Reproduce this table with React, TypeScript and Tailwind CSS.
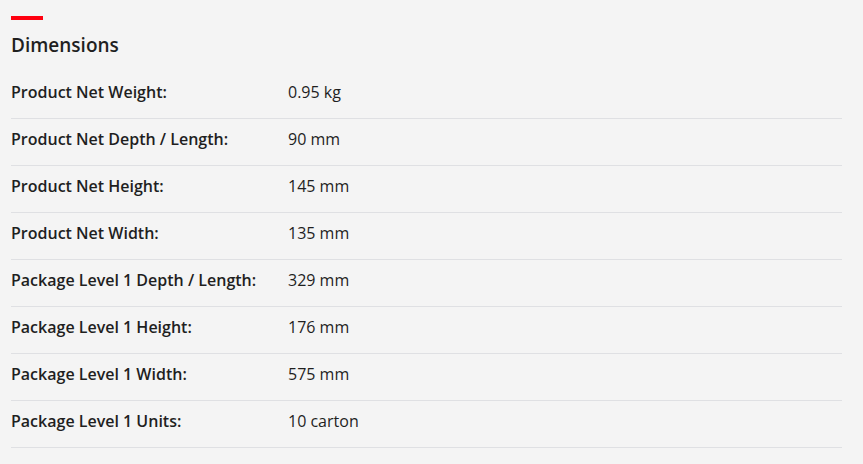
const rows: [string, string][] = [
  ["Product Net Weight:", "0.95 kg"],
  ["Product Net Depth / Length:", "90 mm"],
  ["Product Net Height:", "145 mm"],
  ["Product Net Width:", "135 mm"],
  ["Package Level 1 Depth / Length:", "329 mm"],
  ["Package Level 1 Height:", "176 mm"],
  ["Package Level 1 Width:", "575 mm"],
  ["Package Level 1 Units:", "10 carton"],
];

export default function App() {
  return (
    <div className="min-h-[464px] w-full bg-[#f4f4f4] px-[11px] pt-[16px] font-['Open_Sans','Noto_Sans',sans-serif] text-[#1f1f1f]">
      <div className="h-[4px] w-[32px] bg-[#ff000f]" />
      <h2 className="mt-[14px] text-[19px] font-semibold leading-[22px]">Dimensions</h2>
      <div className="mt-[16px] w-[831px]">
        {rows.map(([label, value]) => (
          <div key={label} className="flex border-b border-[#dfe0e3] pt-[9px] pb-[15px] text-[16px] leading-[22px]">
            <div className="w-[277px] font-semibold">{label}</div>
            <div>{value}</div>
          </div>
        ))}
      </div>
    </div>
  );
}
